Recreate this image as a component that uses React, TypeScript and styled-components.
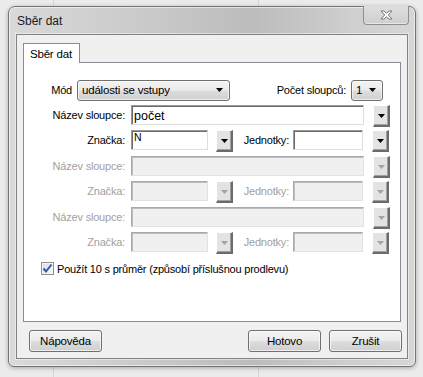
import styled, { createGlobalStyle } from "styled-components";

const columns = [
  { enabled: true, name: "počet", mark: "N" },
  { enabled: false, name: "", mark: "" },
  { enabled: false, name: "", mark: "" },
];

const Arrow = ({ disabled }: { disabled?: boolean }) => (
  <svg width="7" height="4" viewBox="0 0 7 4">
    <path d="M0 0 H7 L3.5 4 Z" fill={disabled ? "#a3a3a3" : "#000"} />
  </svg>
);

export default function App() {
  return (
    <>
      <GlobalStyle />
      <Window>
        <TitleBar>
          <Title>Sběr dat</Title>
          <CloseButton>
            <svg width="13" height="10" viewBox="0 0 13 10">
              <path
                d="M1 1 H4 L6.5 3.3 L9 1 H12 L8.3 5 L12 9 H9 L6.5 6.7 L4 9 H1 L4.7 5 Z"
                fill="#fff"
                stroke="#6a6e73"
                strokeWidth="0.9"
                strokeLinejoin="round"
              />
            </svg>
          </CloseButton>
        </TitleBar>
        <Client>
          <TabStrip>
            <Tab>Sběr dat</Tab>
          </TabStrip>
          <Panel>
            <ModeRow>
              <Label $width={53} $pad={5}>Mód</Label>
              <Combo $width={153}>
                <span>události se vstupy</span>
                <Arrow />
              </Combo>
              <CountLabel>Počet sloupců:</CountLabel>
              <Combo $width={32}>
                <span>1</span>
                <Arrow />
              </Combo>
            </ModeRow>
            <Fields>
              {columns.map((col, i) => (
                <FieldPair key={i}>
                  <FieldRow>
                    <Label $width={107} $pad={6} $disabled={!col.enabled}>
                      Název sloupce:
                    </Label>
                    <TextBox $width={233} $disabled={!col.enabled}>
                      {col.name}
                    </TextBox>
                    <DropButton $offset={9} $disabled={!col.enabled}>
                      <Arrow disabled={!col.enabled} />
                    </DropButton>
                  </FieldRow>
                  <FieldRow>
                    <Label $width={107} $pad={6} $disabled={!col.enabled}>
                      Značka:
                    </Label>
                    <TextBox $width={77} $disabled={!col.enabled} $small>
                      {col.mark}
                    </TextBox>
                    <DropButton $offset={8} $disabled={!col.enabled}>
                      <Arrow disabled={!col.enabled} />
                    </DropButton>
                    <Label $width={60} $pad={4} $disabled={!col.enabled}>
                      Jednotky:
                    </Label>
                    <TextBox $width={70} $disabled={!col.enabled} />
                    <DropButton $offset={9} $disabled={!col.enabled}>
                      <Arrow disabled={!col.enabled} />
                    </DropButton>
                  </FieldRow>
                </FieldPair>
              ))}
            </Fields>
            <CheckRow>
              <CheckBox>
                <svg width="11" height="11" viewBox="0 0 11 11">
                  <path
                    d="M1.5 5.5 L4 8.5 L9.5 1.5"
                    fill="none"
                    stroke="#3358a8"
                    strokeWidth="2"
                  />
                </svg>
              </CheckBox>
              <span>Použít 10 s průměr (způsobí příslušnou prodlevu)</span>
            </CheckRow>
          </Panel>
          <ButtonRow>
            <PushButton>Nápověda</PushButton>
            <Spacer />
            <PushButton>Hotovo</PushButton>
            <PushButton>Zrušit</PushButton>
          </ButtonRow>
        </Client>
      </Window>
    </>
  );
}

const GlobalStyle = createGlobalStyle`
  html, body { margin: 0; padding: 0; }
  body {
    width: 423px;
    height: 377px;
    overflow: hidden;
    background-color: #ebebeb;
    background-image: linear-gradient(#d6d6d6, #d6d6d6), linear-gradient(#d6d6d6, #d6d6d6);
    background-size: 1px 100%, 1px 100%;
    background-position: 53px 0, 258px 0;
    background-repeat: no-repeat;
    font-family: "Liberation Sans", Arial, sans-serif;
    font-size: 11px;
    letter-spacing: -0.2px;
    color: #000;
  }
  #root { padding: 6px 0 0 8px; }
`;

const Window = styled.div`
  width: 408px;
  height: 361px;
  box-sizing: border-box;
  border: 1px solid #747474;
  border-radius: 7px 7px 6px 6px;
  background: linear-gradient(90deg, #d9d9d9 0%, #c9c9c9 35%, #bcbcbc 60%, #cfcfcf 85%, #d6d6d6 100%);
  box-shadow: inset 0 0 0 1px rgba(255, 255, 255, 0.55), 0 1px 4px rgba(0, 0, 0, 0.3);
  display: flex;
  flex-direction: column;
  padding: 0 7px 7px 7px;
`;

const TitleBar = styled.div`
  height: 27px;
  display: flex;
  align-items: flex-start;
`;

const Title = styled.div`
  margin: 7px 0 0 1px;
  font-size: 12px;
  line-height: 14px;
  letter-spacing: 0;
  color: #1b1b1b;
  flex: 1;
`;

const CloseButton = styled.div`
  width: 46px;
  height: 19px;
  margin: -1px -1px 0 0;
  box-sizing: border-box;
  border: 1px solid #8d8f92;
  border-top: none;
  border-radius: 0 0 4px 4px;
  background: linear-gradient(#dedede, #cfcfcf);
  box-shadow: inset 0 -1px 0 rgba(255, 255, 255, 0.5);
  display: flex;
  align-items: center;
  justify-content: center;
`;

const Client = styled.div`
  flex: 1;
  border: 1px solid #838383;
  box-shadow: 0 0 0 1px rgba(255, 255, 255, 0.45);
  background: #f0f0f0;
  padding: 8px 6px 6px 6px;
  display: flex;
  flex-direction: column;
`;

const TabStrip = styled.div`
  display: flex;
`;

const Tab = styled.div`
  height: 20px;
  box-sizing: border-box;
  padding: 0 7px 0 6px;
  border: 1px solid #898c95;
  border-bottom: none;
  background: #fff;
  margin-bottom: -1px;
  position: relative;
  z-index: 1;
  line-height: 20px;
  font-size: 11.5px;
`;

const Panel = styled.div`
  flex: 1;
  border: 1px solid #898c95;
  background: #fff;
  padding: 17px 17px 0 0;
  display: flex;
  flex-direction: column;
`;

const ModeRow = styled.div`
  display: flex;
  align-items: center;
  height: 20px;
`;

const Label = styled.div<{ $width: number; $pad: number; $disabled?: boolean }>`
  width: ${(p) => p.$width}px;
  flex: none;
  box-sizing: border-box;
  padding-right: ${(p) => p.$pad}px;
  text-align: right;
  line-height: 20px;
  white-space: nowrap;
  color: ${(p) => (p.$disabled ? "#a1a1a1" : "#000")};
`;

const CountLabel = styled.div`
  margin-left: auto;
  padding-right: 5px;
  line-height: 20px;
`;

const Combo = styled.div<{ $width: number }>`
  width: ${(p) => p.$width}px;
  height: 21px;
  box-sizing: border-box;
  border: 1px solid #707070;
  border-radius: 3px;
  background: linear-gradient(#f3f3f3 0%, #ebebeb 48%, #dddddd 52%, #d0d0d0 100%);
  box-shadow: inset 0 0 0 1px rgba(255, 255, 255, 0.6);
  display: flex;
  align-items: center;
  justify-content: space-between;
  padding: 0 6px 0 4px;
  font-size: 11.5px;
`;

const Fields = styled.div`
  margin-top: 5px;
  display: flex;
  flex-direction: column;
  gap: 5px;
`;

const FieldPair = styled.div`
  display: flex;
  flex-direction: column;
  gap: 4px;
`;

const FieldRow = styled.div`
  display: flex;
  align-items: flex-start;
  height: 21px;
`;

const TextBox = styled.div<{ $width: number; $disabled?: boolean; $small?: boolean }>`
  width: ${(p) => p.$width}px;
  height: 20px;
  flex: none;
  box-sizing: border-box;
  border: 1px solid;
  border-color: ${(p) => (p.$disabled ? "#a9a9a9 #e2e2e2 #e2e2e2 #a9a9a9" : "#9a9a9a #dedede #dedede #9a9a9a")};
  box-shadow: inset 1px 1px 0 ${(p) => (p.$disabled ? "#bdbdbd" : "#6a6a6a")};
  background: ${(p) => (p.$disabled ? "#f0f0f0" : "#fff")};
  padding: ${(p) => (p.$small ? "0 2px" : "2px 2px 0")};
  font-size: ${(p) => (p.$small ? "10.5px" : "12.5px")};
  line-height: ${(p) => (p.$small ? "13px" : "16px")};
  letter-spacing: 0;
`;

const DropButton = styled.div<{ $offset: number; $disabled?: boolean }>`
  width: 17px;
  height: 22px;
  flex: none;
  margin-left: ${(p) => p.$offset}px;
  box-sizing: border-box;
  background: #e3e3e3;
  border-top: 1px solid #fff;
  border-left: 1px solid #fff;
  border-right: 2px solid #6b6b6b;
  border-bottom: 2px solid #6b6b6b;
  box-shadow: inset -1px -1px 0 #a0a0a0;
  display: flex;
  align-items: center;
  justify-content: center;
`;

const CheckRow = styled.div`
  display: flex;
  align-items: center;
  gap: 3px;
  margin: 9px 0 0 17px;
  font-size: 11px;
`;

const CheckBox = styled.div`
  width: 13px;
  height: 13px;
  box-sizing: border-box;
  border: 1px solid #8e8f8f;
  background: linear-gradient(135deg, #dcdcdc, #fbfbfb);
  box-shadow: inset 0 0 0 1px #f4f4f4;
  display: flex;
  align-items: center;
  justify-content: center;
`;

const ButtonRow = styled.div`
  display: flex;
  gap: 8px;
  margin: 8px -1px 0 6px;
`;

const Spacer = styled.div`
  flex: 1;
`;

const PushButton = styled.div`
  width: 73px;
  height: 22px;
  box-sizing: border-box;
  border: 1px solid #707070;
  border-radius: 3px;
  background: linear-gradient(#f3f3f3 0%, #ebebeb 48%, #dddddd 52%, #cfcfcf 100%);
  box-shadow: inset 0 0 0 1px rgba(255, 255, 255, 0.65);
  display: flex;
  align-items: center;
  justify-content: center;
  padding-bottom: 1px;
  font-size: 11.5px;
`;
